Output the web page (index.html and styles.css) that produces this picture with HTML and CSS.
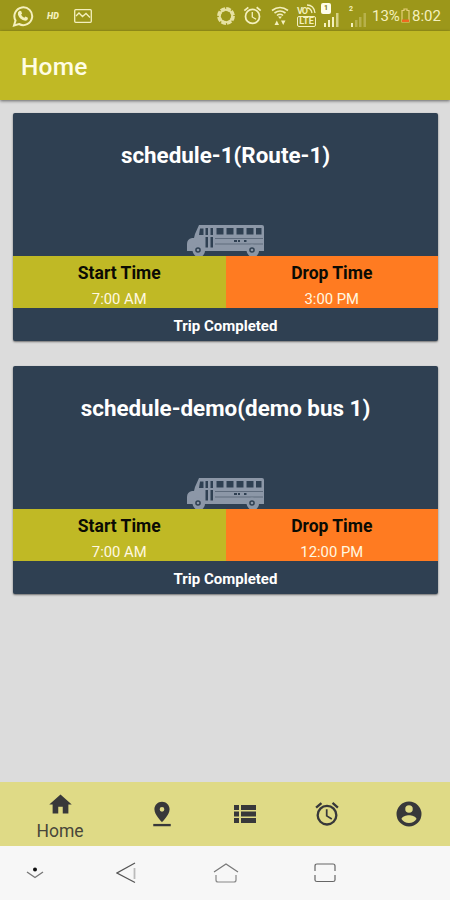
FILE: index.html
```html
<!DOCTYPE html>
<html lang="en">
<head>
<meta charset="utf-8">
<title>Home</title>
<link rel="stylesheet" href="styles.css">
</head>
<body>
<svg class="defs" width="0" height="0" aria-hidden="true">
  <symbol id="bus" viewBox="0 0 80 32">
    <path fill="#8c97a7" d="M14 1h63q2 0 2 2v24h-5a6 6 0 0 1-12 0H20a6 6 0 0 1-12 0H2V20q0-5 5-6h2l1-4z"/>
    <g fill="#2f4052"><path d="M15 4.500h3.500V11H14zM20.500 4H23v7h-2.500zM25.500 4H28v7h-2.500zM31.500 4h7v6.500h-7zM41.500 4h7v6.500h-7zM51.500 4h7v6.500h-7zM61.500 4h7v6.500h-7zM71 4h5.500v6.500H71zM20.500 13H23v10.500h-2.500zM25.500 13H28v10.500h-2.500z"/>
    <path opacity=".5" d="M30 14h48v1H30zM30 19.500h48v1H30z"/><path d="M49 16h3v2h-3zM53 16h2v2h-2zM59 16h2.500v2H59z"/></g>
    <g fill="#2f4052" stroke="#8c97a7" stroke-width="2.800"><circle cx="13" cy="26" r="4.200"/><circle cx="67" cy="26" r="4.200"/></g>
    <g fill="#8c97a7"><circle cx="13" cy="26" r="1.300"/><circle cx="67" cy="26" r="1.300"/></g>
  </symbol>
  <symbol id="alarm" viewBox="0 0 24 24">
    <path fill="currentColor" d="M22 5.700l-4.600-3.900-1.300 1.500 4.600 3.900L22 5.700zM7.900 3.400L6.600 1.900 2 5.700l1.300 1.500 4.600-3.800zM12.500 8H11v6l4.700 2.900.8-1.200-4-2.400V8zM12 4a9 9 0 1 0 0 18 9 9 0 0 0 0-18zm0 16a7 7 0 1 1 0-14 7 7 0 0 1 0 14z"/>
  </symbol>
</svg>
<div class="status">
  <svg class="whatsapp" width="22" height="22" viewBox="0 0 22 22"><path d="M2 20.500l1.500-5A8.900 8.900 0 1 1 7 19z" fill="none" stroke="currentColor" stroke-width="2"/><path d="M7.500 5.800l1.600.1 1 2.600-1 1.200q1 2 3.200 3l1.200-1.100 2.400 1.200q.2 3-2.700 3-5.500-.8-7.300-6.300-.5-2.400 1.600-3.700z" fill="currentColor"/></svg>
  <span class="hd">HD</span>
  <svg class="picture" width="18" height="14" viewBox="0 0 18 14" fill="none" stroke="currentColor" stroke-width="1.300"><rect x=".7" y=".7" width="16.600" height="12.600" rx="1"/><path d="M2 7l3-3 3.500 3.500L12 4.500l4 4"/></svg>
  <svg class="sync" width="20" height="20" viewBox="0 0 20 20" fill="none" stroke="currentColor"><circle cx="10" cy="10" r="7" stroke-width="3.800" stroke-dasharray="4.400 1.100"/><circle cx="10" cy="10" r="6.300" stroke-width="2"/></svg>
  <svg class="clock" width="21" height="21"><use href="#alarm"/></svg>
  <svg class="wifi" width="18" height="20" viewBox="0 0 18 20"><g fill="none" stroke="currentColor" stroke-width="1.600"><path d="M1 4.500q8-6 16 0M3.500 7q5.500-4 11 0M6 9.500q3-2.500 6 0"/></g><path d="M7 10.500h4L9 13zM3.500 19h4.500l-2.200-4.500zM10 14.500h4.500L12.200 19z" fill="currentColor"/></svg>
  <div class="volte"><span class="vo">VO</span><svg width="9" height="10" viewBox="0 0 9 10" fill="none" stroke="currentColor" stroke-width="1.300"><path d="M0 1q7 0 8 8M0 4q4 0 5 5"/></svg><span class="lte">LTE</span></div>
  <div class="signal one"><span>1</span><svg width="20" height="15" viewBox="0 0 20 15" fill="currentColor"><path d="M3 11h2v4H3zM7 8h2v7H7zM11 5h2v10h-2z"/><path opacity=".65" d="M15 1h2.500v14H15z"/></svg></div>
  <div class="signal two"><span>2</span><svg width="20" height="15" viewBox="0 0 20 15" fill="currentColor"><path d="M2 11h2v4H2z"/><path opacity=".3" d="M6 8h2.500v7H6zM10 5h2.500v10H10zM14.500 1H17v14h-2.500z"/></svg></div>
  <span class="percent">13%</span>
  <svg class="battery" width="9" height="15" viewBox="0 0 9 15"><path d="M1 2.500h2V1h3v1.500h2v11.500H1z" fill="none" stroke="#e5cf78" stroke-width="1.200"/><path d="M1 11.500h7V14H1z" fill="#ef6a20"/></svg>
  <span class="time">8:02</span>
</div>
<header class="appbar"><h1>Home</h1></header>
<main class="list">
  <article class="card">
    <div class="hero"><h2>schedule-1(Route-1)</h2><svg class="bus" width="80" height="32"><use href="#bus"/></svg></div>
    <div class="times">
      <div class="slot start"><h3>Start Time</h3><p>7:00 AM</p></div>
      <div class="slot drop"><h3>Drop Time</h3><p>3:00 PM</p></div>
    </div>
    <div class="state">Trip Completed</div>
  </article>
  <article class="card">
    <div class="hero"><h2>schedule-demo(demo bus 1)</h2><svg class="bus" width="80" height="32"><use href="#bus"/></svg></div>
    <div class="times">
      <div class="slot start"><h3>Start Time</h3><p>7:00 AM</p></div>
      <div class="slot drop"><h3>Drop Time</h3><p>12:00 PM</p></div>
    </div>
    <div class="state">Trip Completed</div>
  </article>
</main>
<nav class="tabs">
  <a class="tab active"><svg width="27" height="27" viewBox="0 0 24 24" fill="currentColor"><path d="M10 20v-6h4v6h5v-8h3L12 3 2 12h3v8z"/></svg><span>Home</span></a>
  <a class="tab"><svg width="28" height="28" viewBox="0 0 24 24" fill="currentColor"><path fill-rule="evenodd" d="M18.500 8c0-3.600-2.900-6.500-6.500-6.500S5.500 4.400 5.500 8c0 4.900 6.500 11 6.500 11s6.500-6.100 6.500-11zM10 8a2 2 0 1 1 4 0 2 2 0 0 1-4 0z"/><path d="M4.500 20.500h15v2h-15z"/></svg></a>
  <a class="tab"><svg width="22" height="18" viewBox="0 0 22 18" fill="currentColor"><path d="M0 0h5v5H0zM7 0h15v5H7zM0 6.500h5v5H0zM7 6.500h15v5H7zM0 13h5v5H0zM7 13h15v5H7z"/></svg></a>
  <a class="tab"><svg width="28" height="28"><use href="#alarm"/></svg></a>
  <a class="tab"><svg width="30" height="30" viewBox="0 0 24 24" fill="currentColor"><path d="M12 2a10 10 0 1 0 0 20 10 10 0 0 0 0-20zm0 3a3 3 0 1 1 0 6 3 3 0 0 1 0-6zm0 14.200a7.200 7.200 0 0 1-6-3.220c.03-1.990 4-3.080 6-3.080s5.970 1.090 6 3.080a7.200 7.200 0 0 1-6 3.220z"/></svg></a>
</nav>
<footer class="sysnav">
  <svg class="hide" width="18" height="12" viewBox="0 0 18 12"><path d="M1 5l8 5.500L17 5" fill="none" stroke="#777" stroke-width="1.400"/><circle cx="9" cy="2.500" r="2" fill="#111"/></svg>
  <svg class="back" width="20" height="22" viewBox="0 0 20 22" fill="none"><path d="M19 1L1 11l18 9.500" stroke="#555" stroke-width="1.200"/><path d="M18.500 6v11" stroke="#bbb" stroke-width="1.800"/></svg>
  <svg class="house" width="26" height="22" viewBox="0 0 26 22" fill="none" stroke="#777" stroke-width="1.200"><path d="M1 10L13 2l12 8"/><path d="M3 13v5q0 2 2 2h16q2 0 2-2v-5" stroke="#888"/></svg>
  <svg class="recent" width="22" height="20" viewBox="0 0 22 20" fill="none" stroke="#666" stroke-width="1.200"><path d="M1 8V3q0-2 2-2h16q2 0 2 2v5M1 12v5q0 1.500 2 1.500h16q2 0 2-1.500v-5"/></svg>
</footer>
</body>
</html>
```
FILE: styles.css
```css
* { box-sizing: border-box; }
body { margin: 0; width: 450px; height: 900px; overflow: hidden; display: flex; flex-direction: column; background: #dcdcdc; font-family: Roboto, sans-serif; }
svg { display: block; flex: none; }
.defs { position: absolute; }
h1, h2, h3, p { margin: 0; }

.status { height: 31px; flex: none; display: flex; align-items: center; padding-left: 12px; background: #9c971a; color: #f4f0bd; white-space: nowrap; }
.hd { width: 16px; margin-left: 13px; font-size: 9px; font-weight: 900; font-style: italic; }
.picture { margin-left: 11px; }
.sync { margin-left: 124px; color: #e6e1a2; }
.clock { margin-left: 6px; }
.wifi { margin-left: 8px; }
.volte { width: 19px; height: 23px; margin-left: 8px; display: grid; grid-template-columns: 10px 9px; grid-template-rows: 12px 11px; }
.vo { font-size: 9px; line-height: 15px; font-weight: 700; letter-spacing: -1px; }
.lte { grid-column: 1 / 3; border: 1px solid currentColor; border-radius: 2px; font-size: 9px; line-height: 9px; font-weight: 700; text-align: center; }
.signal { width: 21px; height: 22px; margin-left: 5px; display: flex; align-items: flex-end; position: relative; }
.signal span { position: absolute; left: 0; top: 0; font-size: 7px; line-height: 9px; font-weight: 700; }
.signal.one span { top: -2px; width: 10px; height: 11px; line-height: 11px; border-radius: 2px; background: #fffde8; color: #77730f; text-align: center; }
.signal.two { margin-left: 7px; width: 20px; }
.percent { width: 29px; margin-left: 3px; font-size: 15px; }
.time { margin-left: 2px; font-size: 15px; }

.appbar { height: 69px; flex: none; display: flex; align-items: center; padding: 2px 0 0 21px; background: #c0b925; box-shadow: 0 1px 3px rgba(0,0,0,.55); z-index: 1; }
.appbar h1 { font-size: 24.500px; line-height: 30px; font-weight: 500; color: #fffde4; letter-spacing: .2px; }

.list { flex: 1; display: flex; flex-direction: column; gap: 25px; padding: 13px 12px 0 13px; }
.card { height: 228px; flex: none; overflow: hidden; border-radius: 2px; background: #2f4052; box-shadow: 0 1px 2px rgba(0,0,0,.5); color: #fff; text-align: center; }
.hero { height: 143px; padding-top: 27px; display: flex; flex-direction: column; align-items: center; justify-content: space-between; }
.hero h2 { font-size: 22.400px; line-height: 30px; font-weight: 700; white-space: nowrap; }
.bus { margin-right: 1px; }
.times { display: grid; grid-template-columns: 1fr 1fr; height: 52px; }
.slot { padding-top: 6px; }
.start { background: #c0b925; }
.drop { background: #ff7b21; }
.slot h3 { font-size: 17.500px; line-height: 22px; font-weight: 700; color: #0b0b04; }
.slot p { font-size: 14.800px; line-height: 18px; margin-top: 6px; color: #fff8e0; }
.state { height: 33px; line-height: 36px; font-size: 15px; font-weight: 700; }

.tabs { height: 64px; flex: none; display: grid; grid-template-columns: 120px 83px 83px 81px 83px; background: #dfda86; color: #38383a; }
.tab { display: flex; flex-direction: column; align-items: center; justify-content: center; }
.tab.active { padding-top: 4px; }
.tab span { font-size: 17.500px; line-height: 20px; margin-top: 3px; color: #48473a; }
.sysnav { height: 54px; flex: none; display: flex; align-items: center; padding-left: 26px; background: #f7f7f7; }
.back { margin-left: 72px; }
.house { margin-left: 77px; }
.recent { margin-left: 75px; }
```
